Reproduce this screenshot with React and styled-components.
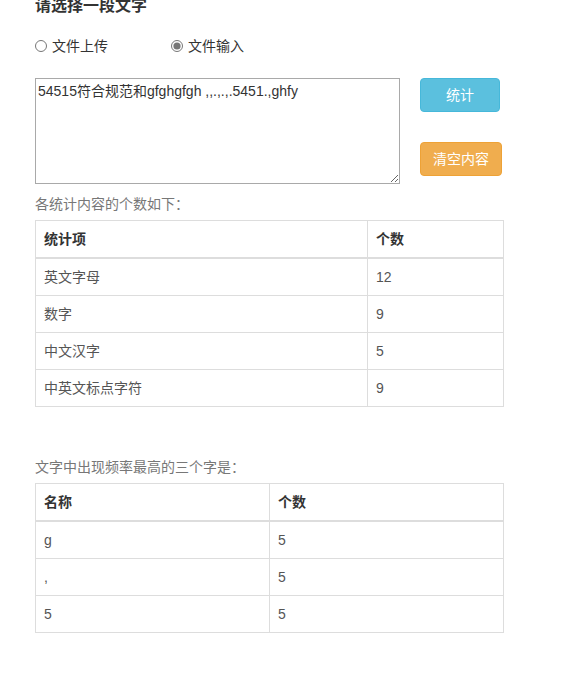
import React from "react";
import styled, { createGlobalStyle } from "styled-components";

const Global = createGlobalStyle`
  html, body { margin: 0; padding: 0; background: #fff; }
  body {
    font-family: "Liberation Sans", "Noto Sans CJK SC", sans-serif;
    font-size: 14px;
    line-height: 20px;
    color: #333;
  }
`;

const Page = styled.div`
  padding: 0 0 40px 35px;
  width: 469px;
`;

const Title = styled.h3`
  margin: -4px 0 0 0;
  font-size: 16px;
  line-height: 20px;
  font-weight: bold;
  color: #333;
`;

const RadioRow = styled.div`
  display: flex;
  align-items: center;
  margin-top: 20px;
  height: 20px;
`;

const RadioLabel = styled.label`
  display: flex;
  align-items: center;
  width: ${(p) => p.$w}px;
  color: #333;
  font-size: 14px;
`;

const Radio = styled.input`
  width: 12px;
  height: 12px;
  margin: 0 5px 0 0;
  accent-color: #777;
`;

const InputRow = styled.div`
  display: flex;
  margin-top: 22px;
`;

const TextBox = styled.textarea`
  box-sizing: border-box;
  width: 365px;
  height: 106px;
  border: 1px solid #a9a9a9;
  padding: 3px 2px;
  font-family: "Liberation Sans", "Noto Sans CJK SC", sans-serif;
  font-size: 14px;
  line-height: 18px;
  color: #333;
  margin: 0;
`;

const ButtonCol = styled.div`
  display: flex;
  flex-direction: column;
  align-items: flex-start;
  gap: 30px;
  margin-left: 20px;
`;

const Button = styled.button`
  box-sizing: border-box;
  height: 34px;
  min-width: ${(p) => p.$min || 0}px;
  padding: 6px 12px;
  border-radius: 4px;
  border: 1px solid ${(p) => p.$border};
  background: ${(p) => p.$bg};
  color: #fff;
  font-family: "Liberation Sans", "Noto Sans CJK SC", sans-serif;
  font-size: 14px;
  line-height: 20px;
  cursor: pointer;
`;

const Caption = styled.div`
  color: #777;
  font-size: 14px;
  line-height: 20px;
  margin-top: ${(p) => p.$mt}px;
  margin-bottom: 6px;
`;

const Table = styled.table`
  width: 469px;
  border-collapse: collapse;
  border: 1px solid #ddd;
  font-size: 14px;
`;

const Th = styled.th`
  text-align: left;
  font-weight: bold;
  color: #333;
  padding: 8px;
  line-height: 20px;
  border: 1px solid #ddd;
  border-bottom: 2px solid #ddd;
  width: ${(p) => p.$w || "auto"};
`;

const Td = styled.td`
  padding: 8px;
  line-height: 20px;
  color: #555;
  border: 1px solid #ddd;
`;

const stats = [
  ["英文字母", "12"],
  ["数字", "9"],
  ["中文汉字", "5"],
  ["中英文标点字符", "9"],
];

const top3 = [
  ["g", "5"],
  [",", "5"],
  ["5", "5"],
];

export default function App() {
  return (
    <>
      <Global />
      <Page>
        <Title>请选择一段文字</Title>
        <RadioRow>
          <RadioLabel $w={136}>
            <Radio type="radio" name="src" />
            文件上传
          </RadioLabel>
          <RadioLabel $w={120}>
            <Radio type="radio" name="src" defaultChecked />
            文件输入
          </RadioLabel>
        </RadioRow>
        <InputRow>
          <TextBox defaultValue="54515符合规范和gfghgfgh ,,.,.,.5451.,ghfy" />
          <ButtonCol>
            <Button $bg="#5bc0de" $border="#46b8da" $min={80}>统计</Button>
            <Button $bg="#f0ad4e" $border="#eea236">清空内容</Button>
          </ButtonCol>
        </InputRow>
        <Caption $mt={10}>各统计内容的个数如下：</Caption>
        <Table>
          <thead>
            <tr>
              <Th $w="315px">统计项</Th>
              <Th>个数</Th>
            </tr>
          </thead>
          <tbody>
            {stats.map(([k, v]) => (
              <tr key={k}>
                <Td>{k}</Td>
                <Td>{v}</Td>
              </tr>
            ))}
          </tbody>
        </Table>
        <Caption $mt={50}>文字中出现频率最高的三个字是：</Caption>
        <Table>
          <thead>
            <tr>
              <Th $w="217px">名称</Th>
              <Th>个数</Th>
            </tr>
          </thead>
          <tbody>
            {top3.map(([k, v], i) => (
              <tr key={i}>
                <Td>{k}</Td>
                <Td>{v}</Td>
              </tr>
            ))}
          </tbody>
        </Table>
      </Page>
    </>
  );
}
